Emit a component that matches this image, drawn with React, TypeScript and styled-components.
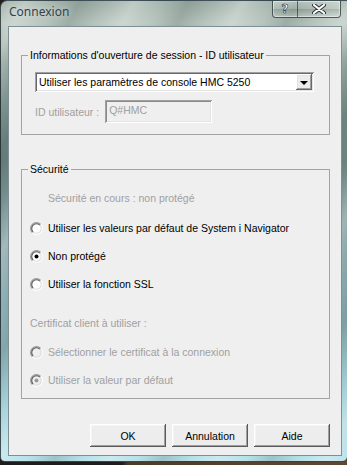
import React, { useId } from "react";
import styled, { createGlobalStyle } from "styled-components";

const GlobalStyle = createGlobalStyle`
  html, body {
    margin: 0;
    padding: 0;
  }
  body {
    width: 347px;
    height: 465px;
    overflow: hidden;
    background: #2a2520;
    font-family: "Liberation Sans", Arial, sans-serif;
  }
`;

const Desktop = styled.div`
  width: 347px;
  height: 465px;
  background: linear-gradient(to right, #1f1d1b 0, #1f1d1b 122px, #4b3b2b 128px, #5e4833 100%);
`;

const Window = styled.div`
  width: 347px;
  height: 462px;
  box-sizing: border-box;
  display: flex;
  flex-direction: column;
  border: 1px solid rgba(20, 30, 35, 0.75);
  border-right: none;
  border-radius: 7px 0 5px 5px;
  background:
    repeating-linear-gradient(118deg, rgba(255, 255, 255, 0) 0, rgba(255, 255, 255, 0.28) 22px, rgba(255, 255, 255, 0) 48px, rgba(40, 60, 55, 0.18) 70px, rgba(255, 255, 255, 0) 96px),
    linear-gradient(to bottom, #a4b4ac 0, #b9c7c0 22px, #8ea19a 60px, #6f8583 160px, #8fb4ba 320px, #a9d6de 420px, #b9e2ea 462px);
  overflow: hidden;
`;

const TitleBar = styled.div`
  height: 25px;
  flex: none;
  display: flex;
  justify-content: space-between;
  align-items: flex-start;
  padding: 0 6px 0 8px;
`;

const Title = styled.div`
  font-family: "Noto Sans", "Open Sans", sans-serif;
  font-size: 12px;
  line-height: 16px;
  padding-top: 3px;
  color: #33424c;
  text-shadow: 0 0 6px rgba(255, 255, 255, 0.7);
`;

const CaptionGroup = styled.div`
  display: flex;
  height: 16px;
  border: 1px solid rgba(30, 40, 45, 0.7);
  border-top: none;
  border-radius: 0 0 4px 4px;
  overflow: hidden;
  box-shadow: inset 0 0 0 1px rgba(255, 255, 255, 0.45);
`;

const CaptionButton = styled.div<{ $w: number }>`
  width: ${(p) => p.$w}px;
  display: flex;
  align-items: center;
  justify-content: center;
  background: linear-gradient(to bottom, rgba(255, 255, 255, 0.35), rgba(255, 255, 255, 0.1) 50%, rgba(0, 0, 0, 0.08) 51%, rgba(255, 255, 255, 0.2));
  & + & {
    border-left: 1px solid rgba(30, 40, 45, 0.6);
  }
`;

const HelpGlyph = styled.span`
  font-family: "DejaVu Sans", sans-serif;
  font-weight: bold;
  font-size: 12px;
  line-height: 12px;
  color: #fff;
  -webkit-text-stroke: 0.6px #2a3338;
`;

const Client = styled.div`
  height: 430px;
  margin: 0 5px 0 7px;
  box-sizing: border-box;
  border: 1px solid #7f8f96;
  background: #efefef;
  padding: 22px 11px 0 12px;
  display: flex;
  flex-direction: column;
  font-size: 10.5px;
  color: #000;
`;

const GroupBox = styled.fieldset<{ $gap?: number }>`
  margin: ${(p) => p.$gap ?? 0}px 0 0 0;
  padding: 0;
  border: 1px solid #a3a3a3;
  min-width: 0;
`;

const Legend = styled.legend`
  margin-left: 6px;
  padding: 0 2px;
  font-size: 10.5px;
  line-height: 13px;
  color: #000;
`;

const LoginBody = styled.div`
  padding: 10px 15px 11px 13px;
  display: flex;
  flex-direction: column;
  gap: 8px;
`;

const Combo = styled.div`
  height: 20px;
  display: flex;
  align-items: stretch;
  background: #fff;
  box-sizing: border-box;
  padding: 2px;
  box-shadow: inset 1px 1px #a0a0a0, inset -1px -1px #fff, inset 2px 2px #696969, inset -2px -2px #e3e3e3;
`;

const ComboText = styled.div`
  flex: 1;
  padding-left: 2px;
  line-height: 16px;
`;

const DropButton = styled.div`
  width: 16px;
  background: #ececec;
  display: flex;
  align-items: center;
  justify-content: center;
  box-shadow: inset -1px -1px #696969, inset 1px 1px #fff, inset -2px -2px #a0a0a0, inset 2px 2px #e3e3e3;
`;

const Arrow = styled.div`
  width: 0;
  height: 0;
  border-left: 4px solid transparent;
  border-right: 4px solid transparent;
  border-top: 4px solid #000;
  margin-top: 1px;
`;

const FieldRow = styled.div`
  display: flex;
  align-items: center;
  gap: 6px;
`;

const Muted = styled.span`
  color: #a0a0a0;
`;

const TextInput = styled.div`
  width: 107px;
  height: 23px;
  box-sizing: border-box;
  padding: 3px 4px;
  line-height: 14px;
  color: #a0a0a0;
  background: #efefef;
  box-shadow: inset 1px 1px #a0a0a0, inset -1px -1px #fff, inset 2px 2px #8a8a8a, inset -2px -2px #e3e3e3;
`;

const SecurityBody = styled.div`
  padding: 8px 8px 4px 8px;
  display: flex;
  flex-direction: column;
`;

const Line = styled.div<{ $indent?: number; $muted?: boolean; $gap?: number }>`
  height: 28px;
  display: flex;
  align-items: center;
  gap: 5px;
  padding-left: ${(p) => p.$indent ?? 0}px;
  margin-top: ${(p) => p.$gap ?? 0}px;
  color: ${(p) => (p.$muted ? "#a0a0a0" : "#000")};
`;

const ButtonRow = styled.div`
  margin-top: 25px;
  display: flex;
  justify-content: flex-end;
  gap: 6px;
`;

const Button = styled.div`
  width: 76px;
  height: 23px;
  display: flex;
  align-items: center;
  justify-content: center;
  background: #ededed;
  box-shadow: inset -1px -1px #5a5a5a, inset 1px 1px #fff, inset -2px -2px #a0a0a0, inset 2px 2px #f4f4f4;
`;

const Radio: React.FC<{ checked?: boolean; disabled?: boolean }> = ({ checked, disabled }) => {
  const id = useId().replace(/:/g, "");
  return (
    <svg width="13" height="13" viewBox="0 0 13 13" style={{ flex: "none" }}>
      <defs>
        <linearGradient id={`o${id}`} x1="0" y1="0" x2="1" y2="1">
          <stop offset="0.45" stopColor="#9a9a9a" />
          <stop offset="0.55" stopColor="#ffffff" />
        </linearGradient>
        <linearGradient id={`i${id}`} x1="0" y1="0" x2="1" y2="1">
          <stop offset="0.45" stopColor="#555" />
          <stop offset="0.55" stopColor="#dcdcdc" />
        </linearGradient>
      </defs>
      <circle cx="6.5" cy="6.5" r="5.9" fill={disabled ? "#efefef" : "#fff"} stroke={`url(#o${id})`} strokeWidth="1.2" />
      <circle cx="6.5" cy="6.5" r="4.8" fill="none" stroke={`url(#i${id})`} strokeWidth="1.1" />
      {checked && <circle cx="6.5" cy="6.5" r="2" fill={disabled ? "#9a9a9a" : "#000"} />}
    </svg>
  );
};

const CloseGlyph = () => (
  <svg width="14" height="10" viewBox="0 0 14 10">
    <path d="M2 1 L12 9 M12 1 L2 9" stroke="#2a3338" strokeWidth="4" strokeLinecap="round" />
    <path d="M2 1 L12 9 M12 1 L2 9" stroke="#fff" strokeWidth="2.2" strokeLinecap="round" />
  </svg>
);

export default function App() {
  return (
    <Desktop>
      <GlobalStyle />
      <Window>
        <TitleBar>
          <Title>Connexion</Title>
          <CaptionGroup>
            <CaptionButton $w={24}>
              <HelpGlyph>?</HelpGlyph>
            </CaptionButton>
            <CaptionButton $w={42}>
              <CloseGlyph />
            </CaptionButton>
          </CaptionGroup>
        </TitleBar>
        <Client>
          <GroupBox>
            <Legend>Informations d'ouverture de session - ID utilisateur</Legend>
            <LoginBody>
              <Combo>
                <ComboText>Utiliser les paramètres de console HMC 5250</ComboText>
                <DropButton>
                  <Arrow />
                </DropButton>
              </Combo>
              <FieldRow>
                <Muted>ID utilisateur :</Muted>
                <TextInput>Q#HMC</TextInput>
              </FieldRow>
            </LoginBody>
          </GroupBox>

          <GroupBox $gap={28}>
            <Legend>Sécurité</Legend>
            <SecurityBody>
              <Line $indent={18} $muted>Sécurité en cours : non protégé</Line>
              <Line $gap={2}>
                <Radio />
                Utiliser les valeurs par défaut de System i Navigator
              </Line>
              <Line>
                <Radio checked />
                Non protégé
              </Line>
              <Line>
                <Radio />
                Utiliser la fonction SSL
              </Line>
              <Line $gap={11} $muted>Certificat client à utiliser :</Line>
              <Line $gap={1} $muted>
                <Radio disabled />
                Sélectionner le certificat à la connexion
              </Line>
              <Line $muted>
                <Radio checked disabled />
                Utiliser la valeur par défaut
              </Line>
            </SecurityBody>
          </GroupBox>

          <ButtonRow>
            <Button>OK</Button>
            <Button>Annulation</Button>
            <Button>Aide</Button>
          </ButtonRow>
        </Client>
      </Window>
    </Desktop>
  );
}
